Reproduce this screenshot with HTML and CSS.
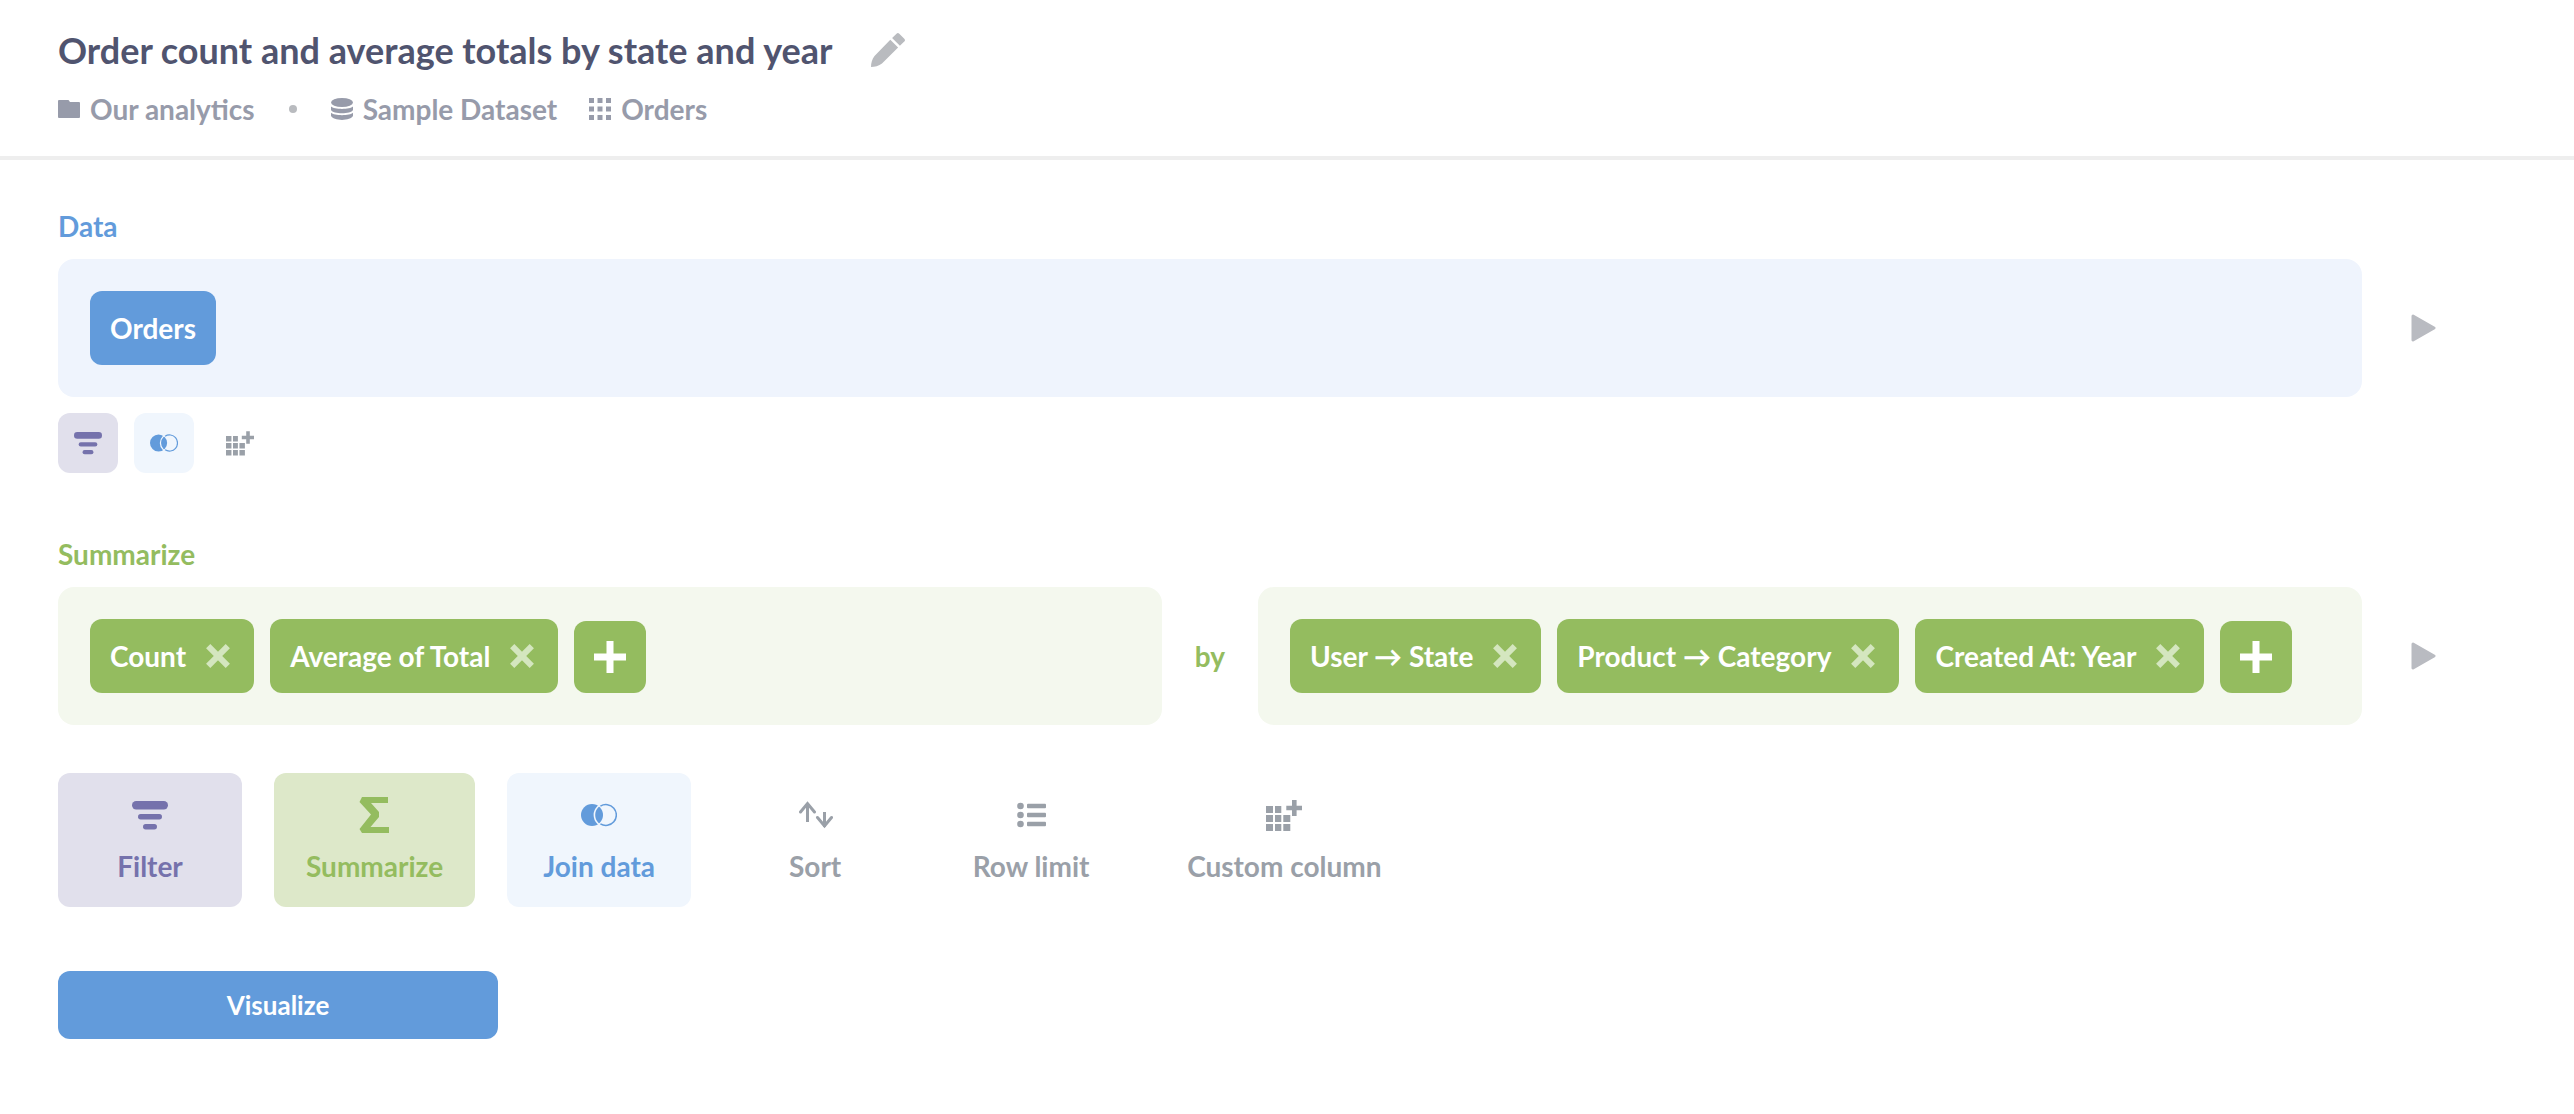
FILE: index.html
```
<!DOCTYPE html>
<html lang="en">

<head>
   <meta charset="UTF-8">
   <meta name="viewport" content="width=device-width, initial-scale=1.0">
   <title>Order count and average totals by state and year</title>

   <link rel="stylesheet" href="styles.css">
</head>

<body>
   <!-- Shared icons -->
   <svg class="sprite" aria-hidden="true">
      <symbol id="icon-filter" viewBox="0 0 36 36">
         <rect x="0" y="4" width="36" height="8.5" rx="4.2" />
         <rect x="6" y="17" width="24" height="5.5" rx="2.7" />
         <rect x="11" y="27" width="14" height="5.5" rx="2.7" />
      </symbol>
      <symbol id="icon-join" viewBox="0 0 36 36">
         <circle cx="11" cy="18" r="11" />
         <circle cx="25" cy="18" r="11.6" fill="none" stroke="#f0f6fd" stroke-width="1.6" />
         <path d="M19.4 9.2A10.4 10.4 0 1 1 19.4 26.8" fill="none" stroke="currentColor" stroke-width="1.5" />
      </symbol>
      <symbol id="icon-custom" viewBox="0 0 36 36">
         <path d="M0 9h7v7H0zM9 9h6.3v7H9zM0 18h7v7H0zM9 18h6.3v7H9zM17.3 18h7v7h-7zM0 27h7v7H0zM9 27h6.3v7H9zM17.3 27h7v7h-7z" />
         <path d="M26 3h4.6v5.7H36v4.6h-5.4V19H26v-5.7h-5.7V8.7H26z" />
      </symbol>
      <symbol id="icon-close" viewBox="0 0 24 24">
         <path d="M2.2 2.2L21.8 21.8M21.8 2.2L2.2 21.8" fill="none" stroke="currentColor" stroke-width="6" />
      </symbol>
      <symbol id="icon-add" viewBox="0 0 32 32">
         <path d="M12.5 0h7v12.5H32v7H19.5V32h-7V19.5H0v-7h12.5z" />
      </symbol>
      <symbol id="icon-play" viewBox="0 0 26 28">
         <path d="M3 2L24 14 3 26z" stroke="currentColor" stroke-width="3" stroke-linejoin="round" />
      </symbol>
   </svg>

   <header class="header">
      <div class="title-row">
         <h1>Order count and average totals by state and year</h1>
         <button class="edit-btn" aria-label="Edit question">
            <svg viewBox="0 0 34 34">
               <path d="M25.5.8a2 2 0 0 1 2.8 0l5 5a2 2 0 0 1 0 2.800l-4.400 4.200-7.800-7.800zM19.300 6.800l7.800 7.800L11 30.500C8 33 3.500 34 0 34c.1-4 1-8 3.500-11z" />
            </svg>
         </button>
      </div>
      <nav class="crumbs">
         <a href="#">
            <svg viewBox="0 0 22 22"><path d="M1 2h9.5l1.5 2h9a1 1 0 0 1 1 1v14a1 1 0 0 1-1 1H1a1 1 0 0 1-1-1V3a1 1 0 0 1 1-1z" /></svg>
            Our analytics
         </a>
         <span class="dot"></span>
         <a href="#">
            <svg viewBox="0 0 22 22">
               <ellipse cx="11" cy="4.5" rx="11" ry="4.5" />
               <path d="M0 8.5c3 3.2 19 3.2 22 0v3.5c-2 4.3-20 4.3-22 0zM0 14.8c3 3.2 19 3.2 22 0v3c-2 5.5-20 5.5-22 0z" />
            </svg>
            Sample Dataset
         </a>
         <a href="#" class="table-link">
            <svg viewBox="0 0 22 22"><path d="M0 0h5v5H0zM8.5 0h5v5h-5zM17 0h5v5h-5zM0 8.5h5v5H0zM8.5 8.5h5v5h-5zM17 8.5h5v5h-5zM0 17h5v5H0zM8.5 17h5v5h-5zM17 17h5v5h-5z" /></svg>
            Orders
         </a>
      </nav>
   </header>

   <main class="notebook">
      <!-- Data step -->
      <section class="step data">
         <h2>Data</h2>
         <div class="step-row">
            <div class="panel">
               <button class="chip">Orders</button>
            </div>
            <button class="play-btn" aria-label="Preview data"><svg><use href="#icon-play" /></svg></button>
         </div>
         <div class="small-actions">
            <button class="filter" aria-label="Filter"><svg><use href="#icon-filter" /></svg></button>
            <button class="join" aria-label="Join data"><svg><use href="#icon-join" /></svg></button>
            <button aria-label="Custom column"><svg><use href="#icon-custom" /></svg></button>
         </div>
      </section>

      <!-- Summarize step -->
      <section class="step summarize-step">
         <h2>Summarize</h2>
         <div class="step-row">
            <div class="panel">
               <div class="chip">Count <button aria-label="Remove Count"><svg><use href="#icon-close" /></svg></button></div>
               <div class="chip">Average of Total <button aria-label="Remove Average of Total"><svg><use href="#icon-close" /></svg></button></div>
               <button class="add-btn" aria-label="Add metric"><svg><use href="#icon-add" /></svg></button>
            </div>
            <span class="by">by</span>
            <div class="panel">
               <div class="chip">User → State <button aria-label="Remove State"><svg><use href="#icon-close" /></svg></button></div>
               <div class="chip">Product → Category <button aria-label="Remove Category"><svg><use href="#icon-close" /></svg></button></div>
               <div class="chip">Created At: Year <button aria-label="Remove Created At"><svg><use href="#icon-close" /></svg></button></div>
               <button class="add-btn" aria-label="Add grouping"><svg><use href="#icon-add" /></svg></button>
            </div>
            <button class="play-btn" aria-label="Preview summary"><svg><use href="#icon-play" /></svg></button>
         </div>
      </section>

      <div class="actions">
         <button class="filter"><svg><use href="#icon-filter" /></svg>Filter</button>
         <button class="summarize">
            <svg viewBox="0 0 36 36"><path d="M5 0h26v6H14l8 9v5l-8.500 10H32v6H5l-2.500-4L14 17.500 2.500 5z" /></svg>
            Summarize
         </button>
         <button class="join"><svg><use href="#icon-join" /></svg>Join data</button>
         <button>
            <svg viewBox="0 0 36 36" fill="none" class="sort-icon">
               <path d="M10.500 25V6M27.500 15v15" />
               <path d="M3.500 15L10.500 6.500l7 8.500M20.500 20.500l7 8.500 7-8.500" stroke-linecap="round" />
            </svg>
            Sort
         </button>
         <button>
            <svg viewBox="0 0 36 36">
               <circle cx="7.5" cy="9" r="3.3" />
               <circle cx="7.5" cy="18" r="3.3" />
               <circle cx="7.5" cy="27" r="3.3" />
               <rect x="14" y="6.8" width="19" height="4.5" rx="1" />
               <rect x="14" y="15.8" width="19" height="4.5" rx="1" />
               <rect x="14" y="24.8" width="19" height="4.5" rx="1" />
            </svg>
            Row limit
         </button>
         <button><svg><use href="#icon-custom" /></svg>Custom column</button>
      </div>

      <button class="visualize-btn">Visualize</button>
   </main>
</body>

</html>
```
FILE: styles.css
```
/* General styling */
* {
   box-sizing: border-box;
}

body {
   font-family: Lato, "Liberation Sans", sans-serif;
   font-size: 28px;
   font-weight: 700;
   line-height: 34px;
   color: #4c5773;
   background-color: #fff;
   margin: 0;
}

h1,
h2 {
   margin: 0;
   font-weight: 700;
}

button {
   font: inherit;
   color: inherit;
   background: none;
   border: none;
   padding: 0;
   cursor: pointer;
}

svg {
   display: block;
   flex: none;
   fill: currentColor;
}

.sprite {
   position: absolute;
   width: 0;
   height: 0;
}

/* Header */
.header {
   padding: 28px 58px 30px;
   border-bottom: 4px solid #eeeeee;
}

.title-row {
   display: flex;
   align-items: center;
   gap: 38px;
   margin-bottom: 20px;
}

h1 {
   font-size: 36px;
   line-height: 44px;
   color: #50546f;
}

.edit-btn {
   color: #b9bbbf;
}

.edit-btn svg {
   width: 34px;
   height: 34px;
}

.crumbs {
   display: flex;
   align-items: center;
}

.crumbs a {
   display: flex;
   align-items: center;
   gap: 10px;
   color: #979baa;
   text-decoration: none;
}

.crumbs svg {
   width: 22px;
   height: 22px;
}

.crumbs .table-link {
   margin-left: 32px;
}

.dot {
   width: 8px;
   height: 8px;
   margin: 0 34px;
   border-radius: 50%;
   background-color: #b9bbbf;
}

/* Notebook steps */
.notebook {
   padding: 49px 138px 64px 58px;
}

.step h2 {
   font-size: 28px;
   margin-bottom: 16px;
}

.data {
   color: #629bdb;
   margin-bottom: 64px;
}

.summarize-step {
   color: #94bc5f;
   margin-bottom: 48px;
}

.step-row {
   display: flex;
   align-items: center;
}

.panel {
   flex: 1 1 0;
   display: flex;
   flex-wrap: wrap;
   align-items: flex-end;
   gap: 16px;
   padding: 32px;
   border-radius: 16px;
}

.data .panel {
   background-color: #eff4fd;
}

.summarize-step .panel {
   background-color: #f4f8ee;
}

.chip {
   display: flex;
   align-items: center;
   gap: 20px;
   padding: 20px;
   border-radius: 12px;
   color: #fff;
}

.data .chip {
   background-color: #629bdb;
}

.summarize-step .chip {
   padding-right: 24px;
   background-color: #94bc5f;
}

.chip button {
   color: #d4e6bf;
}

.chip svg {
   width: 24px;
   height: 24px;
}

.add-btn {
   padding: 20px;
   border-radius: 12px;
   background-color: #94bc5f;
   color: #fff;
}

.add-btn svg {
   width: 32px;
   height: 32px;
}

.by {
   width: 96px;
   text-align: center;
}

.play-btn {
   margin-left: 48px;
   color: #b9bbc1;
}

.play-btn svg {
   width: 26px;
   height: 28px;
}

/* Small buttons under a step */
.small-actions {
   display: flex;
   gap: 16px;
   margin-top: 16px;
}

.small-actions button {
   padding: 16px;
   border-radius: 12px;
   color: #9aa0a8;
}

.small-actions svg {
   width: 28px;
   height: 28px;
}

/* Large action buttons */
.actions {
   display: flex;
   flex-wrap: wrap;
   gap: 32px;
   margin-bottom: 64px;
}

.actions button {
   display: flex;
   flex-direction: column;
   align-items: center;
   gap: 16px;
   min-width: 184px;
   padding: 24px 32px;
   border-radius: 12px;
   color: #9aa0a8;
}

.actions svg {
   width: 36px;
   height: 36px;
}

.sort-icon {
   fill: none;
   stroke: currentColor;
   stroke-width: 3px;
}

.actions .filter,
.small-actions .filter {
   color: #7572ac;
   background-color: #e1e0ec;
}

.actions .summarize {
   color: #94bc5f;
   background-color: #dde8c9;
}

.actions .join,
.small-actions .join {
   color: #629bdb;
   background-color: #f0f6fd;
}

.visualize-btn {
   width: 440px;
   padding: 17px;
   border-radius: 12px;
   font-size: 26px;
   color: #fff;
   background-color: #629bdb;
}
```
